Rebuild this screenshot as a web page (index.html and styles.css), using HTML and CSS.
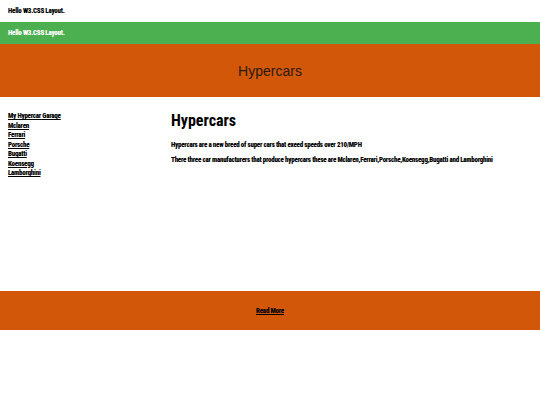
FILE: index.html
```html
<!DOCTYPE html>
<html>
<head>
<meta charset="utf-8">
<link rel="stylesheet" href="styles.css">
</head>
<body>
<div class="topbar">Hello W3.CSS Layout.</div>
<div class="greenbar">Hello W3.CSS Layout.</div>
<div class="header"><span class="header-title">Hypercars</span></div>
<div class="content">
  <nav class="sidebar">
    <a href="#">My Hypercar Garage</a>
    <a href="#">Mclaren</a>
    <a href="#">Ferrari</a>
    <a href="#">Porsche</a>
    <a href="#">Bugatti</a>
    <a href="#">Koensegg</a>
    <a href="#">Lamborghini</a>
  </nav>
  <main class="main">
    <h1 class="title">Hypercars</h1>
    <p class="text">Hypercars are a new breed of super cars that exeed speeds over 210/MPH</p>
    <p class="text">There three car manufacturers that produce hypercars these are Mclaren,Ferrari,Porsche,Koensegg,Bugatti and Lamborghini</p>
  </main>
</div>
<div class="footer"><a href="#">Read More</a></div>
</body>
</html>
```
FILE: styles.css
```css
html, body {
  margin: 0;
  padding: 0;
  background: #fff;
}
body {
  font-family: Roboto, "Open Sans", sans-serif;
  font-stretch: 75%;
  font-weight: 900;
  font-size: 7px;
  letter-spacing: -0.25px;
  color: #000;
}
.topbar {
  height: 22px;
  line-height: 22px;
  padding-left: 8px;
}
.greenbar {
  height: 22px;
  line-height: 22px;
  padding-left: 8px;
  background: #4caf50;
  color: #fff;
}
.header {
  height: 53px;
  background: #d35709;
  display: flex;
  align-items: center;
  justify-content: center;
}
.header-title {
  font-family: "Liberation Sans", Arial, sans-serif;
  font-stretch: normal;
  letter-spacing: 0;
  font-weight: normal;
  font-size: 14px;
  color: #2a1a10;
}
.content {
  display: flex;
  height: 194px;
}
.sidebar {
  width: 163px;
  padding: 15px 0 0 8px;
  display: flex;
  flex-direction: column;
}
.sidebar a {
  color: #000;
  text-decoration: underline;
  line-height: 9.5px;
}
.main {
  flex: 1;
  padding-top: 14px;
}
.title {
  margin: 0;
  font-size: 16px;
  letter-spacing: 0;
  line-height: 20px;
}
.text {
  margin: 0;
  margin-top: 10px;
  line-height: 8px;
}
.text + .text {
  margin-top: 7px;
}
.footer {
  height: 39px;
  background: #d35709;
  display: flex;
  align-items: center;
  justify-content: center;
}
.footer a {
  color: #000;
  text-decoration: underline;
}
```
